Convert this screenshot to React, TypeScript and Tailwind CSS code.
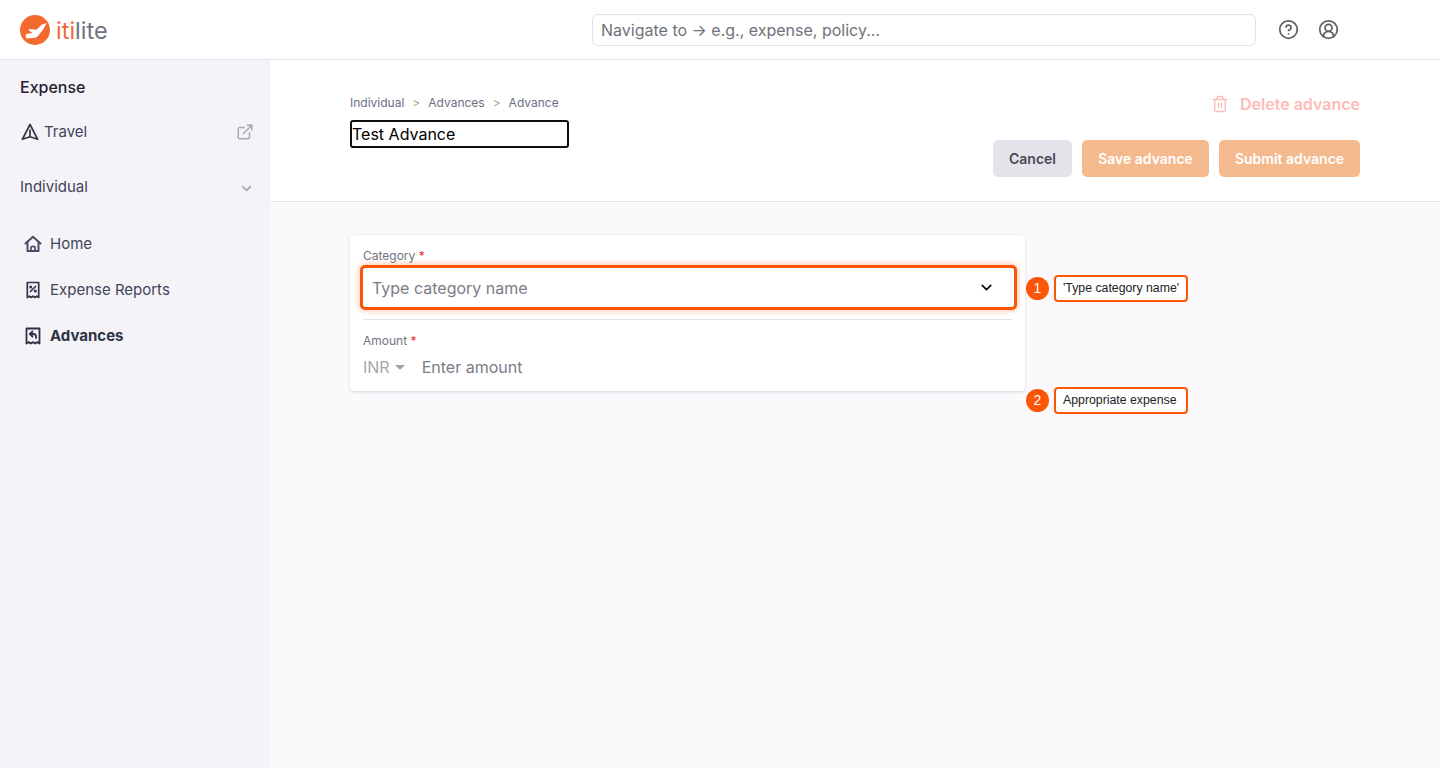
import { ChevronDown, ExternalLink, CircleHelp, CircleUserRound, Trash2 } from "lucide-react";

const Logo = () => (
  <div className="flex items-center">
    <svg width="30" height="30" viewBox="0 0 30 30">
      <circle cx="15" cy="15" r="15" fill="#f26a2e" />
      <path d="M26.700 8L21.500 9.800L16.500 14.800L9.500 14L8.500 15L12.500 18L6.300 19L5.500 21.500L7 23.500L15.500 22.700L18 21L23.500 14Z" fill="#fff" />
    </svg>
    <span className="mt-[3px] ml-[6px] text-[23.500px] leading-none">
      <span className="text-[#f26a3c]">iti</span>
      <span className="text-[#71727f]">lite</span>
    </span>
  </div>
);

const TravelIcon = () => (
  <svg width="18" height="18" viewBox="0 0 18 18" fill="none" stroke="#31343f" strokeWidth="1.700" strokeLinejoin="round">
    <path d="M9 1.500L1.300 16.300L9 13.700L16.700 16.300Z" />
    <path d="M9 6.500V13.500" />
  </svg>
);

const HomeIcon = () => (
  <svg width="18" height="18" viewBox="0 0 18 18" fill="none" stroke="#474d63" strokeWidth="2" strokeLinejoin="round" strokeLinecap="round">
    <path d="M1.500 8.500L9 1.700L16.500 8.500" />
    <path d="M3.500 7.500V16H14.500V7.500" />
    <path d="M7 16V12.500C7 11 11 11 11 12.500V16" strokeWidth="1.700" />
  </svg>
);

const ReportIcon = () => (
  <svg width="18" height="18" viewBox="0 0 18 18" fill="none" stroke="#31364a" strokeWidth="1.700" strokeLinejoin="round" strokeLinecap="round">
    <path d="M3.300 1.500h11.400v15l-2-1.400-1.800 1.400-1.900-1.400-1.900 1.400-1.800-1.400-2 1.400z" />
    <path d="M11.500 5.500l-5 5" />
    <circle cx="6.700" cy="6" r=".7" />
    <circle cx="11.300" cy="10" r=".7" />
  </svg>
);

const AdvanceIcon = () => (
  <svg width="18" height="18" viewBox="0 0 18 18" fill="none" stroke="#2d3343" strokeWidth="1.800" strokeLinejoin="round" strokeLinecap="round">
    <path d="M2.500 1.500h13v15l-2.200-1.400-2.100 1.400-2.200-1.400-2.200 1.400-2.100-1.400-2.200 1.400z" />
    <path d="M8.500 4.500L6 7 8.500 9.500" />
    <path d="M6 7h3.500c1.500 0 2.500 1 2.500 2.500v1.500" />
  </svg>
);

const NavItem = ({ icon, label, active }: { icon: React.ReactNode; label: string; active?: boolean }) => (
  <div className="flex h-[46px] items-center pl-[24px]">
    <span className="flex w-[18px] justify-center">{icon}</span>
    <span className={`ml-[8px] text-[15px] ${active ? "font-bold text-[#2d3343]" : "text-[#3f4558]"}`}>{label}</span>
  </div>
);

const Callout = ({ n, text, top }: { n: number; text: string; top: string }) => (
  <div className={`absolute left-[1026px] flex items-center ${top}`}>
    <span className="flex h-[23px] w-[23px] items-center justify-center rounded-full bg-[#fb5607] font-['Liberation_Sans',sans-serif] text-[14px] text-white">
      {n}
    </span>
    <span className="ml-[5px] flex h-[27px] w-[134px] items-center rounded-[4px] border-2 border-[#fb5607] bg-white pl-[7px] font-['Liberation_Sans',sans-serif] text-[12.300px] whitespace-nowrap text-[#222]">
      {text}
    </span>
  </div>
);

export default function App() {
  return (
    <div className="relative h-[768px] overflow-hidden bg-white font-['Inter',sans-serif]">
      <header className="flex h-[60px] items-center border-b border-[#e4e2e9] bg-white pl-[20px]">
        <div className="w-[572px]">
          <Logo />
        </div>
        <div className="flex h-[32px] w-[664px] items-center rounded-[6px] border border-[#e2e0e6] pl-[8px] text-[16px] text-[#71717a]">
          Navigate to → e.g., expense, policy...
        </div>
        <CircleHelp className="ml-[22px] h-[21px] w-[21px] text-[#5f6068]" strokeWidth={2} />
        <CircleUserRound className="ml-[19px] h-[21px] w-[21px] text-[#5f6068]" strokeWidth={2} />
      </header>

      <div className="flex h-[708px]">
        <aside className="w-[270px] shrink-0 bg-[#f5f3f8]">
          <div className="pt-[17px] pl-[20px] text-[16px] leading-[20px] font-medium text-[#1f2433]">Expense</div>
          <div className="mt-[25px] flex h-[20px] items-center pr-[16px] pl-[21px]">
            <TravelIcon />
            <span className="ml-[5px] flex-1 text-[15px] text-[#3f4558]">Travel</span>
            <ExternalLink className="h-[18px] w-[18px] text-[#a9a9af]" strokeWidth={2} />
          </div>
          <div className="mt-[35px] flex h-[20px] items-center pr-[16px] pl-[20px]">
            <span className="flex-1 text-[15px] text-[#3f4558]">Individual</span>
            <ChevronDown className="mt-[3px] h-[15px] w-[15px] text-[#a9a9af]" strokeWidth={3} />
          </div>
          <div className="mt-[24px]">
            <NavItem icon={<HomeIcon />} label="Home" />
            <NavItem icon={<ReportIcon />} label="Expense Reports" />
            <NavItem icon={<AdvanceIcon />} label="Advances" active />
          </div>
        </aside>

        <main className="flex-1 bg-[#fbf9fc]">
          <section className="flex h-[142px] justify-between border-b border-[#e4e2e9] bg-white pr-[80px] pl-[80px]">
            <div className="pt-[35px]">
              <div className="flex h-[16px] items-center text-[12px] text-[#6d6e82]">
                <span>Individual</span>
                <span className="mx-[8px] text-[#a3a3ad]">&gt;</span>
                <span>Advances</span>
                <span className="mx-[8px] text-[#a3a3ad]">&gt;</span>
                <span>Advance</span>
              </div>
              <div className="mt-[9px] flex h-[28px] w-[219px] items-center rounded-[3px] border-2 border-[#101010] text-[16px] text-black">
                Test Advance
              </div>
            </div>
            <div className="flex flex-col items-end pt-[34px]">
              <div className="flex h-[20px] items-center text-[#fdbcb8]">
                <Trash2 className="h-[18px] w-[18px]" strokeWidth={1.800} />
                <span className="ml-[11px] text-[16px] font-semibold">Delete advance</span>
              </div>
              <div className="mt-[26px] flex gap-[10px] text-[14px] font-semibold">
                <button className="h-[37px] w-[79px] rounded-[5px] bg-[#e5e3ea] text-[#4a4a55]">Cancel</button>
                <button className="h-[37px] w-[127px] rounded-[5px] bg-[#f5b98e] text-white">Save advance</button>
                <button className="h-[37px] w-[141px] rounded-[5px] bg-[#f5b98e] text-white">Submit advance</button>
              </div>
            </div>
          </section>

          <section className="mt-[33px] ml-[80px] h-[156px] w-[675px] rounded-[4px] bg-white shadow-[0_1px_3px_rgba(30,20,60,0.16)]">
            <div className="px-[13px] pt-[13px] text-[12px] leading-[15px] text-[#73737f]">
              Category <span className="text-[#ef2b2b]">*</span>
            </div>
            <div className="mt-[2px] mr-[8px] ml-[10px] flex h-[45px] items-center justify-between rounded-[5px] border-[3px] border-[#fb5607] bg-white pr-[19px] pl-[9px] shadow-[0_0_6px_rgba(251,86,7,0.45)]">
              <span className="text-[16px] text-[#7c7c86]">Type category name</span>
              <ChevronDown className="h-[17px] w-[17px] text-[#111]" strokeWidth={2.500} />
            </div>
            <div className="mx-[13px] mt-[9px] border-t border-[#e4e2e9]" />
            <div className="px-[13px] pt-[13px] text-[12px] leading-[15px] text-[#73737f]">
              Amount <span className="text-[#ef2b2b]">*</span>
            </div>
            <div className="mt-[7px] flex h-[24px] items-center pl-[13px] text-[16px]">
              <span className="text-[#a5a5ad]">INR</span>
              <span className="ml-[5px] h-0 w-0 border-x-[5px] border-t-[5px] border-x-transparent border-t-[#a5a5ad]" />
              <span className="ml-[17px] text-[#7c7c86]">Enter amount</span>
            </div>
          </section>
        </main>
      </div>

      <Callout n={1} text="'Type category name'" top="top-[275px]" />
      <Callout n={2} text="Appropriate expense" top="top-[387px]" />
    </div>
  );
}
